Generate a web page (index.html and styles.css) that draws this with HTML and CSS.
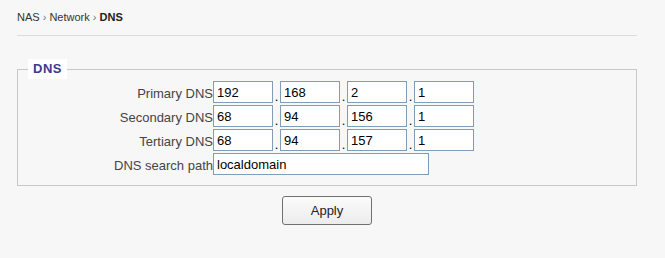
FILE: index.html
```html
<!DOCTYPE html>
<html lang="en">
<head>
    <meta charset="UTF-8">
    <title>DNS</title>
    <link rel="stylesheet" href="styles.css">
</head>
<body>
    <div class="page">
        <div class="crumbs">NAS <span class="sep">&rsaquo;</span> Network <span class="sep">&rsaquo;</span> <b>DNS</b></div>

        <form id="dns-form">
            <fieldset class="box">
                <legend>DNS</legend>
                <div class="field">
                    <label>Primary DNS</label>
                    <div class="ip">
                        <input type="text" value="192"><span class="dot">.</span><input type="text" value="168"><span class="dot">.</span><input type="text" value="2"><span class="dot">.</span><input type="text" value="1">
                    </div>
                </div>
                <div class="field">
                    <label>Secondary DNS</label>
                    <div class="ip">
                        <input type="text" value="68"><span class="dot">.</span><input type="text" value="94"><span class="dot">.</span><input type="text" value="156"><span class="dot">.</span><input type="text" value="1">
                    </div>
                </div>
                <div class="field">
                    <label>Tertiary DNS</label>
                    <div class="ip">
                        <input type="text" value="68"><span class="dot">.</span><input type="text" value="94"><span class="dot">.</span><input type="text" value="157"><span class="dot">.</span><input type="text" value="1">
                    </div>
                </div>
                <div class="field">
                    <label for="search-path">DNS search path</label>
                    <div class="ip">
                        <input type="text" id="search-path" class="wide" value="localdomain">
                    </div>
                </div>
            </fieldset>
            <div class="actions">
                <button type="submit" class="btn">Apply</button>
            </div>
        </form>
    </div>
</body>
</html>
```

FILE: styles.css
```css
body {
    margin: 0;
    background: #f7f7f7;
    font-family: "Liberation Sans", Arial, sans-serif;
    color: #333;
}
.page {
    width: 620px;
    padding: 10px 0 0 17px;
}
.crumbs {
    font-size: 11px;
    line-height: 14px;
    color: #333;
    padding-bottom: 11px;
    border-bottom: 1px solid #dcdcdc;
}
.crumbs .sep {
    color: #777;
}
.crumbs b {
    color: #222;
}
.box {
    margin: 23px 0 0;
    padding: 1px 0 9px;
    border: 1px solid #c8c8c8;
    min-width: 0;
}
.box legend {
    margin-left: 10px;
    padding: 0 5px;
    background: #fff;
    color: #3b3b8f;
    font-size: 13px;
    font-weight: bold;
    line-height: 20px;
    letter-spacing: 0.5px;
}
.field {
    display: grid;
    grid-template-columns: 195px auto;
    align-items: center;
    height: 24px;
}
.field label {
    text-align: right;
    font-size: 13px;
    color: #444;
    padding-top: 3px;
}
.ip {
    display: flex;
    align-items: flex-end;
}
.ip input {
    box-sizing: border-box;
    width: 60px;
    height: 22px;
    margin: 0;
    padding: 0 3px;
    border: 1px solid #7f9db9;
    background: #fff;
    font-family: "Liberation Sans", Arial, sans-serif;
    font-size: 13px;
    color: #000;
}
.ip input.wide {
    width: 216px;
}
.dot {
    width: 7px;
    text-align: center;
    font-size: 13px;
    line-height: 13px;
    color: #000;
}
.actions {
    display: flex;
    justify-content: center;
    padding-top: 10px;
}
.btn {
    width: 90px;
    height: 29px;
    border: 1px solid #707070;
    border-radius: 3px;
    background: linear-gradient(#fbfbfb, #ececec);
    font-family: "Liberation Sans", Arial, sans-serif;
    font-size: 13px;
    color: #222;
}
```
